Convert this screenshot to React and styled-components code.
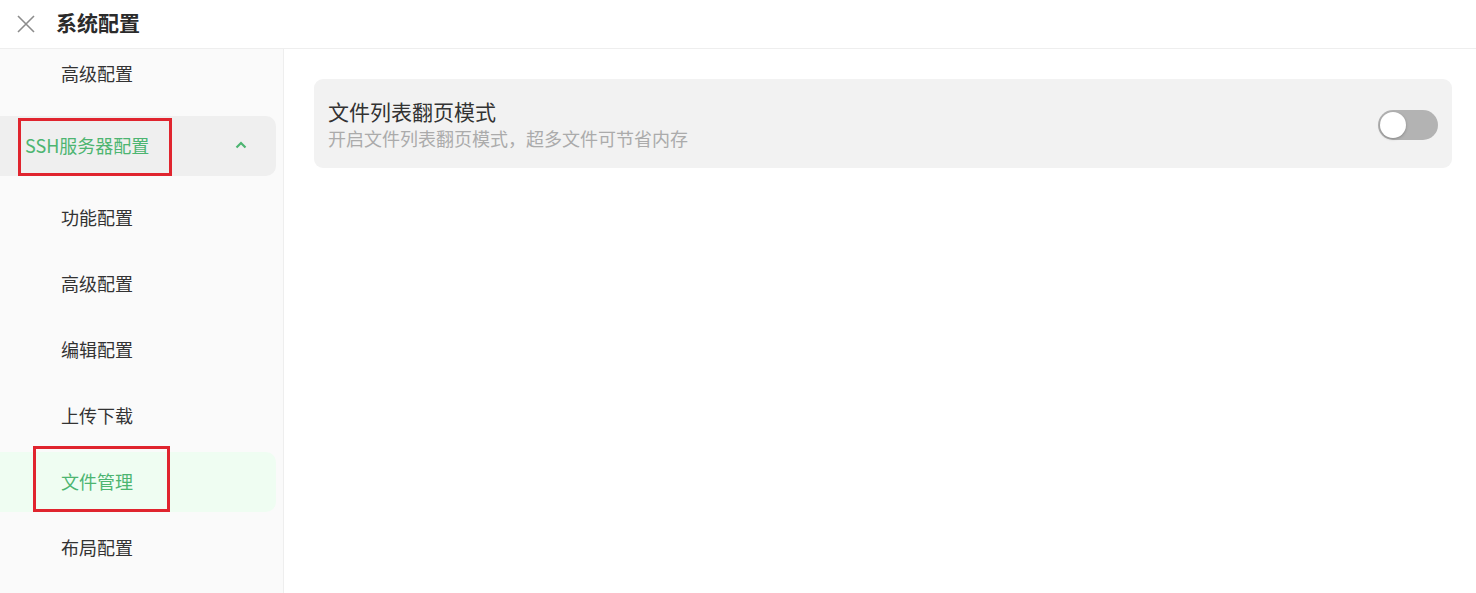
import styled, { createGlobalStyle } from "styled-components";

const Global = createGlobalStyle`
  html, body {
    margin: 0;
    padding: 0;
    background: #fff;
    font-family: "Noto Sans CJK SC", "Noto Sans", sans-serif;
    color: #333;
  }
`;

const Style = {
  Page: styled.div`
    width: 1476px;
    height: 593px;
    display: flex;
    flex-direction: column;
    overflow: hidden;
  `,
  Header: styled.div`
    height: 49px;
    box-sizing: border-box;
    flex-shrink: 0;
    display: flex;
    align-items: center;
    padding: 0 0 4px 16px;
    gap: 20px;
    border-bottom: 1px solid #eeeeee;
  `,
  Close: styled.div`
    width: 20px;
    height: 20px;
    display: flex;
    align-items: center;
    justify-content: center;
    margin-top: 3px;
    cursor: pointer;
  `,
  Title: styled.h1`
    margin: 0;
    font-size: 21px;
    font-weight: 700;
    color: #2b2b2b;
  `,
  Body: styled.div`
    flex: 1;
    display: flex;
    min-height: 0;
  `,
  Sidebar: styled.div`
    width: 283px;
    flex-shrink: 0;
    background: #fafafa;
    border-right: 1px solid #eeeeee;
    overflow: hidden;
  `,
  Menu: styled.div`
    display: flex;
    flex-direction: column;
    gap: 6px;
    margin-top: -5px;
    padding-right: 7px;
  `,
  Item: styled.div`
    position: relative;
    height: 60px;
    box-sizing: border-box;
    flex-shrink: 0;
    display: flex;
    align-items: center;
    padding: 0 24px 2px ${(p) => (p.$group ? "25px" : "61px")};
    margin: ${(p) => (p.$group ? "6px 0" : "0")};
    font-size: 18px;
    color: ${(p) => (p.$active || p.$group ? "#4db571" : "#333")};
    background: ${(p) =>
      p.$active ? "#effdf2" : p.$group ? "#efefef" : "transparent"};
    border-radius: 0 10px 10px 0;
    cursor: pointer;
  `,
  Label: styled.span`
    flex: 1;
  `,
  Mark: styled.div`
    position: absolute;
    border: 3px solid #e0242e;
    box-sizing: border-box;
    pointer-events: none;
  `,
  Content: styled.div`
    flex: 1;
    padding: 30px 24px 0 30px;
  `,
  Card: styled.div`
    height: 89px;
    box-sizing: border-box;
    background: #f2f2f2;
    border-radius: 9px;
    display: flex;
    align-items: center;
    padding: 0 14px;
  `,
  Texts: styled.div`
    flex: 1;
    display: flex;
    flex-direction: column;
    gap: 2px;
  `,
  CardTitle: styled.div`
    font-size: 21px;
    line-height: 26px;
    color: #333;
  `,
  CardDesc: styled.div`
    font-size: 18px;
    line-height: 24px;
    color: #ababab;
  `,
  Switch: styled.div`
    position: relative;
    width: 60px;
    height: 30px;
    border-radius: 15px;
    background: #b3b3b3;
    flex-shrink: 0;
    margin-top: 2px;
    cursor: pointer;
  `,
  Knob: styled.div`
    position: absolute;
    top: 2px;
    left: 2px;
    width: 26px;
    height: 26px;
    border-radius: 50%;
    background: #fff;
    box-shadow: 0 1px 3px rgba(0, 0, 0, 0.25);
  `,
};

const subItems = ["功能配置", "高级配置", "编辑配置", "上传下载", "文件管理", "布局配置"];

function App() {
  return (
    <Style.Page>
      <Global />
      <Style.Header>
        <Style.Close>
          <svg width="18" height="18" viewBox="0 0 18 18">
            <path d="M1 1 L17 17 M17 1 L1 17" stroke="#8c8c8c" strokeWidth="1.6" fill="none" />
          </svg>
        </Style.Close>
        <Style.Title>系统配置</Style.Title>
      </Style.Header>
      <Style.Body>
        <Style.Sidebar>
          <Style.Menu>
            <Style.Item>
              <Style.Label>高级配置</Style.Label>
            </Style.Item>
            <Style.Item $group>
              <Style.Label>SSH服务器配置</Style.Label>
              <svg width="14" height="10" viewBox="0 0 14 10" style={{ marginRight: "4px" }}>
                <path d="M2.5 7.5 L7 3 L11.5 7.5" stroke="#4db571" strokeWidth="2.2" fill="none" />
              </svg>
              <Style.Mark style={{ left: 18, top: 2, width: 154, height: 58 }} />
            </Style.Item>
            {subItems.map((t) => (
              <Style.Item key={t} $active={t === "文件管理"}>
                <Style.Label>{t}</Style.Label>
                {t === "文件管理" && (
                  <Style.Mark style={{ left: 33, top: -6, width: 137, height: 66 }} />
                )}
              </Style.Item>
            ))}
          </Style.Menu>
        </Style.Sidebar>
        <Style.Content>
          <Style.Card>
            <Style.Texts>
              <Style.CardTitle>文件列表翻页模式</Style.CardTitle>
              <Style.CardDesc>开启文件列表翻页模式，超多文件可节省内存</Style.CardDesc>
            </Style.Texts>
            <Style.Switch>
              <Style.Knob />
            </Style.Switch>
          </Style.Card>
        </Style.Content>
      </Style.Body>
    </Style.Page>
  );
}

export default App;
